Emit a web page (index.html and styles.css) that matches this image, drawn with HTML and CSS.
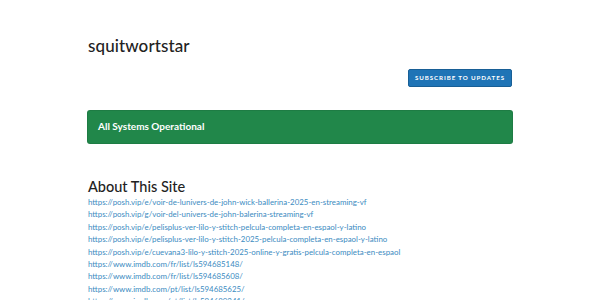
FILE: index.html
```html
<!DOCTYPE html>
<html>
<head>
<meta charset="utf-8">
<link rel="stylesheet" href="styles.css">
</head>
<body>
<div class="page">
  <div class="header">
    <h1 class="title">squitwortstar</h1>
  </div>
  <div class="actions">
    <a class="subscribe">Subscribe to Updates</a>
  </div>
  <div class="status">All Systems Operational</div>
  <div class="about">
    <h2 class="about-title">About This Site</h2>
    <div class="links">
      <a class="link">https://posh.vip/e/voir-de-lunivers-de-john-wick-ballerina-2025-en-streaming-vf</a>
      <a class="link">https://posh.vip/g/voir-del-univers-de-john-balerina-streaming-vf</a>
      <a class="link">https://posh.vip/e/pelisplus-ver-lilo-y-stitch-pelcula-completa-en-espaol-y-latino</a>
      <a class="link">https://posh.vip/e/pelisplus-ver-lilo-y-stitch-2025-pelcula-completa-en-espaol-y-latino</a>
      <a class="link">https://posh.vip/e/cuevana3-lilo-y-stitch-2025-online-y-gratis-pelcula-completa-en-espaol</a>
      <a class="link">https://www.imdb.com/fr/list/ls594685148/</a>
      <a class="link">https://www.imdb.com/fr/list/ls594685608/</a>
      <a class="link">https://www.imdb.com/pt/list/ls594685625/</a>
      <a class="link">https://www.imdb.com/pt/list/ls594680241/</a>
    </div>
  </div>
</div>
</body>
</html>
```

FILE: styles.css
```css
html, body {
  margin: 0;
  padding: 0;
  background: #ffffff;
}
body {
  font-family: Lato, "Open Sans", sans-serif;
  color: #333333;
}
.page {
  width: 424px;
  margin: 0 auto;
  padding-top: 36px;
}
.title {
  margin: 0;
  font-size: 17px;
  font-weight: 500;
  line-height: 20px;
  color: #222222;
  letter-spacing: 0.1px;
}
.actions {
  display: flex;
  justify-content: flex-end;
  margin-top: 13px;
}
.subscribe {
  display: block;
  background: #1f74b6;
  color: #ffffff;
  font-size: 6.2px;
  font-weight: 700;
  letter-spacing: 0.9px;
  text-transform: uppercase;
  white-space: nowrap;
  height: 18px;
  line-height: 16px;
  border-radius: 2px;
  border: 1px solid #185f96;
  box-sizing: border-box;
  width: 104px;
  text-align: center;
}
.status {
  margin-top: 24px;
  height: 32px;
  background: #21874a;
  border-radius: 2px;
  color: #ffffff;
  font-size: 10px;
  font-weight: 700;
  line-height: 31px;
  padding-left: 10px;
  box-shadow: 0 0 0 1px #1e7c44;
}
.about {
  margin-top: 35px;
}
.about-title {
  margin: 0;
  font-size: 14.5px;
  font-weight: 500;
  line-height: 18px;
  color: #222222;
}
.links {
  display: flex;
  flex-direction: column;
  margin-top: 0;
}
.link {
  font-size: 7.9px;
  line-height: 12.4px;
  color: #3b8bbf;
  white-space: nowrap;
}
```
